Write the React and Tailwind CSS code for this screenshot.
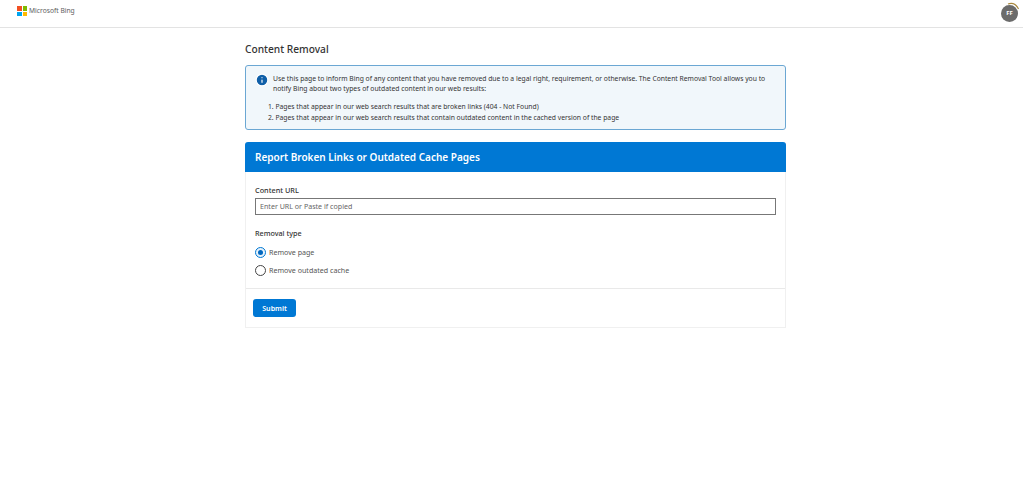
import { Info } from 'lucide-react'

function Logo() {
  return (
    <div className="flex items-center gap-[2px]">
      <div className="grid h-[10px] w-[10px] grid-cols-2 gap-px">
        <span className="bg-[#f25022]" />
        <span className="bg-[#7fba00]" />
        <span className="bg-[#00a4ef]" />
        <span className="bg-[#ffb900]" />
      </div>
      <span className="text-[6.7px] text-[#5e5e5e]">Microsoft Bing</span>
    </div>
  )
}

function Avatar() {
  return (
    <div className="relative mt-[2px] flex h-[17px] w-[17px] items-center justify-center rounded-full bg-[#6b6b6b] text-[6px] font-bold text-white">
      FF
      <svg className="absolute -top-[3px] -right-[2px]" width="14" height="10" viewBox="0 0 14 10" fill="none">
        <path d="M2 2C6 0.5 10 2 12.5 7" stroke="#a8873c" strokeWidth="1.2" />
      </svg>
    </div>
  )
}

function Radio({ checked, label }) {
  return (
    <div className="flex h-[18px] items-center gap-[3px]">
      {checked ? (
        <span className="flex h-[11px] w-[11px] items-center justify-center rounded-full border border-[#0078d4] bg-[#e6f2fb]">
          <span className="h-[5px] w-[5px] rounded-full bg-[#0067c0]" />
        </span>
      ) : (
        <span className="h-[11px] w-[11px] rounded-full border border-[#444]" />
      )}
      <span className="text-[7.1px] text-[#555]">{label}</span>
    </div>
  )
}

export default function App() {
  return (
    <div className="min-h-[483px] bg-white font-['Noto_Sans',sans-serif] text-[#222]">
      <header className="flex h-[28px] items-start justify-between border-b border-[#e3e3e3] pt-[3px] pr-[5px] pl-[17px]">
        <div className="pt-[3px]">
          <Logo />
        </div>
        <Avatar />
      </header>

      <main className="ml-[245px] w-[541px] pt-[13px]">
        <h1 className="text-[10.2px] leading-[16px] font-medium text-[#333]">Content Removal</h1>

        <div className="mt-[8px] flex h-[65px] gap-[4px] rounded-[3px] border border-[#6ba7d3] bg-[#f1f7fb] pt-[8px] pl-[10px] text-[6.77px] leading-[10px] text-[#333]">
          <Info size={14} className="-mt-[1px] -ml-[1px] shrink-0 fill-[#0f5fa8] text-white" />
          <div>
            <p>Use this page to inform Bing of any content that you have removed due to a legal right, requirement, or otherwise. The Content Removal Tool allows you to</p>
            <p>notify Bing about two types of outdated content in our web results:</p>
            <ol className="mt-[7px] -ml-[5px] leading-[11px]">
              <li>1. Pages that appear in our web search results that are broken links (404 - Not Found)</li>
              <li>2. Pages that appear in our web search results that contain outdated content in the cached version of the page</li>
            </ol>
          </div>
        </div>

        <section className="mt-[12px] rounded-t-[3px] border-x border-b border-[#f0f0f0]">
          <h2 className="-mx-px flex h-[30px] items-center rounded-t-[3px] bg-[#0078d4] pl-[10px] text-[10px] font-semibold text-white">
            Report Broken Links or Outdated Cache Pages
          </h2>

          <div className="h-[117px] border-b border-[#e9e9e9] px-[9px] pt-[12px]">
            <label className="block text-[7.3px] leading-[12px] font-medium text-[#333]">Content URL</label>
            <input
              readOnly
              placeholder="Enter URL or Paste if copied"
              className="mt-[2px] block h-[17px] w-full border border-[#777] pr-[4px] pb-px pl-[4px] text-[7.1px] placeholder:text-[#666]"
            />
            <p className="mt-[12px] text-[7.2px] leading-[12px] font-medium text-[#333]">Removal type</p>
            <div className="mt-[4px]">
              <Radio checked label="Remove page" />
              <Radio label="Remove outdated cache" />
            </div>
          </div>

          <div className="flex h-[38px] items-start pt-[10px] pl-[7px]">
            <button className="h-[18px] w-[43px] rounded-[3px] bg-[#0078d4] text-[7.1px] font-semibold text-white">Submit</button>
          </div>
        </section>
      </main>
    </div>
  )
}
